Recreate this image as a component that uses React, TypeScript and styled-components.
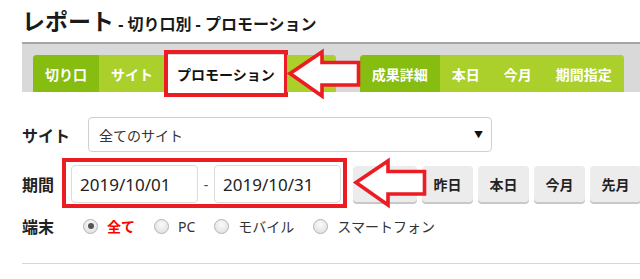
import React from 'react';
import styled, { createGlobalStyle } from 'styled-components';

const GlobalStyle = createGlobalStyle`
  html, body {
    margin: 0;
    padding: 0;
    background: #fff;
  }
  body {
    font-family: "Noto Sans", "Noto Sans CJK JP", sans-serif;
    color: #222;
  }
`;

const Page = styled.div`
  width: 640px;
  height: 279px;
  overflow: hidden;
  padding-left: 22px;
  box-sizing: border-box;
`;

const Title = styled.h1`
  margin: 0;
  height: 42px;
  line-height: 42px;
  font-size: 23px;
  font-weight: 700;
  color: #1a1a1a;
  white-space: nowrap;
`;

const SubTitle = styled.span`
  font-size: 16px;
`;

const TabBar = styled.div`
  position: relative;
  display: flex;
  align-items: flex-end;
  height: 48px;
  border-top: 2px solid #a5a5a5;
  background: #d9d9d9;
  padding-left: 11px;
`;

const TabGroup = styled.div<{ $offset?: number }>`
  display: flex;
  height: 37px;
  margin-left: ${(p) => p.$offset ?? 0}px;
  border-radius: 4px 4px 0 0;
  background: #acd02b;
`;

const Tab = styled.div<{ $variant?: 'dark' | 'light' | 'active'; $first?: boolean; $last?: boolean; $width?: number }>`
  position: relative;
  display: flex;
  align-items: center;
  justify-content: center;
  padding: 0 12px;
  ${(p) => (p.$width ? `width: ${p.$width}px; padding: 0; box-sizing: border-box;` : '')}
  font-size: 14px;
  font-weight: 700;
  white-space: nowrap;
  color: ${(p) => (p.$variant === 'active' ? '#111' : '#fff')};
  background: ${(p) =>
    p.$variant === 'dark' ? '#86bd10' : p.$variant === 'active' ? '#fff' : '#acd02b'};
  border-top-left-radius: ${(p) => (p.$first ? '4px' : '0')};
  border-top-right-radius: ${(p) => (p.$last ? '4px' : '0')};

  ${(p) =>
    p.$variant === 'active' &&
    `
    &::after {
      content: '';
      position: absolute;
      left: -1px;
      right: -1px;
      top: -5px;
      bottom: -5px;
      border: 4px solid #ec1c24;
    }
  `}
`;

const ArrowBox = styled.svg<{ $left: number; $top: number }>`
  position: absolute;
  left: ${(p) => p.$left}px;
  top: ${(p) => p.$top}px;
  overflow: visible;
`;

const Arrow: React.FC<{ left: number; top: number }> = ({ left, top }) => (
  <ArrowBox $left={left} $top={top} width="74" height="50" viewBox="0 0 74 50">
    <path
      d="M3 24.5 L35 3 L35 13.5 L71.5 13.5 L71.5 36 L35 36 L35 47 Z"
      fill="#fff"
      stroke="#ec1c24"
      strokeWidth="3.6"
      strokeLinejoin="miter"
    />
  </ArrowBox>
);

const Form = styled.div`
  display: flex;
  flex-direction: column;
  margin-top: 25px;
`;

const Row = styled.div<{ $gap?: number; $height: number }>`
  position: relative;
  display: flex;
  align-items: center;
  height: ${(p) => p.$height}px;
  margin-top: ${(p) => p.$gap ?? 0}px;
`;

const Label = styled.div<{ $width: number }>`
  width: ${(p) => p.$width}px;
  flex-shrink: 0;
  font-size: 16px;
  font-weight: 700;
  color: #222;
`;

const Select = styled.div`
  display: flex;
  align-items: center;
  justify-content: space-between;
  width: 404px;
  height: 35px;
  box-sizing: border-box;
  padding: 0 8px 0 10px;
  border: 1px solid #cfcfcf;
  border-radius: 4px;
  font-size: 14px;
  color: #333;
`;

const Caret = styled.span`
  font-size: 9px;
  color: #111;
`;

const DateGroup = styled.div`
  position: relative;
  display: flex;
  align-items: center;

  &::after {
    content: '';
    position: absolute;
    left: -9px;
    right: -6px;
    top: -7px;
    bottom: -5px;
    border: 4px solid #ec1c24;
    pointer-events: none;
  }
`;

const DateInput = styled.div`
  width: 127px;
  height: 38px;
  box-sizing: border-box;
  display: flex;
  align-items: center;
  padding-left: 8px;
  border: 1px solid #dcdcdc;
  border-radius: 4px;
  font-size: 17px;
  color: #222;
`;

const Dash = styled.span`
  width: 16px;
  text-align: center;
  font-size: 14px;
  color: #444;
`;

const QuickButtons = styled.div`
  display: flex;
  gap: 5px;
  margin-left: 12px;
`;

const QuickButton = styled.button<{ $width?: number }>`
  width: ${(p) => p.$width ?? 51}px;
  height: 36px;
  flex-shrink: 0;
  border: none;
  border-radius: 4px;
  background: #ececec;
  box-shadow: 0 2px 0 #c8c8c8;
  font-family: inherit;
  font-size: 14px;
  font-weight: 700;
  color: #222;
  padding: 0;
`;

const Radios = styled.div`
  display: flex;
  align-items: center;
  margin-left: 29px;
`;

const RadioItem = styled.label`
  display: flex;
  align-items: center;
  margin-right: 19px;
`;

const RadioCircle = styled.span<{ $checked?: boolean }>`
  position: relative;
  width: 13px;
  height: 13px;
  border-radius: 50%;
  border: 1px solid #b4b4b4;
  background: radial-gradient(circle at 50% 35%, #fafafa 0%, #dcdcdc 100%);
  margin-right: 9px;
  flex-shrink: 0;

  ${(p) =>
    p.$checked &&
    `
    &::after {
      content: '';
      position: absolute;
      left: 3.5px;
      top: 3.5px;
      width: 6px;
      height: 6px;
      border-radius: 50%;
      background: #555;
    }
  `}
`;

const RadioText = styled.span<{ $checked?: boolean }>`
  font-size: 14px;
  font-weight: ${(p) => (p.$checked ? 700 : 400)};
  color: ${(p) => (p.$checked ? '#f00' : '#333')};
`;

const Divider = styled.hr`
  margin: 25px 0 0;
  border: none;
  border-top: 1px solid #d8d8d8;
`;

const devices = [
  { label: '全て', checked: true },
  { label: 'PC' },
  { label: 'モバイル' },
  { label: 'スマートフォン' },
];

export default function App() {
  return (
    <>
      <GlobalStyle />
      <Page>
        <Title>
          レポート<SubTitle> - 切り口別 - プロモーション</SubTitle>
        </Title>

        <TabBar>
          <TabGroup>
            <Tab $variant="dark" $first>切り口</Tab>
            <Tab $variant="light">サイト</Tab>
            <Tab $variant="active">プロモーション</Tab>
            <Tab $variant="light" $last $width={49} />
          </TabGroup>
          <TabGroup $offset={24}>
            <Tab $variant="dark" $first>成果詳細</Tab>
            <Tab $variant="light">本日</Tab>
            <Tab $variant="light">今月</Tab>
            <Tab $variant="light" $last>期間指定</Tab>
          </TabGroup>
          <Arrow left={265} top={5} />
        </TabBar>

        <Form>
          <Row $height={35}>
            <Label $width={66}>サイト</Label>
            <Select>
              全てのサイト
              <Caret>▼</Caret>
            </Select>
          </Row>

          <Row $height={38} $gap={13}>
            <Label $width={49}>期間</Label>
            <DateGroup>
              <DateInput>2019/10/01</DateInput>
              <Dash>-</Dash>
              <DateInput>2019/10/31</DateInput>
            </DateGroup>
            <QuickButtons>
              <QuickButton $width={64}>一昨日</QuickButton>
              <QuickButton>昨日</QuickButton>
              <QuickButton>本日</QuickButton>
              <QuickButton>今月</QuickButton>
              <QuickButton>先月</QuickButton>
            </QuickButtons>
            <Arrow left={331} top={-7} />
          </Row>

          <Row $height={24} $gap={11}>
            <Label $width={32}>端末</Label>
            <Radios>
              {devices.map((d) => (
                <RadioItem key={d.label}>
                  <RadioCircle $checked={d.checked} />
                  <RadioText $checked={d.checked}>{d.label}</RadioText>
                </RadioItem>
              ))}
            </Radios>
          </Row>
        </Form>

        <Divider />
      </Page>
    </>
  );
}
